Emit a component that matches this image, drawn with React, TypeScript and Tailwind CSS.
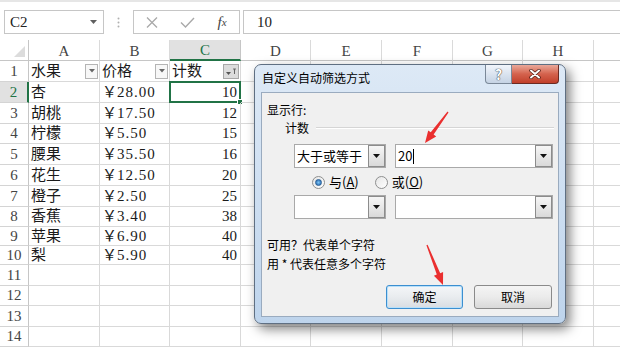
import React from 'react';

const COLS = [
  { key: 'A', cls: 'w-[71px]' },
  { key: 'B', cls: 'w-[70px]' },
  { key: 'C', cls: 'w-[71px]' },
  { key: 'D', cls: 'w-[70px]' },
  { key: 'E', cls: 'w-[71px]' },
  { key: 'F', cls: 'w-[71px]' },
  { key: 'G', cls: 'w-[70px]' },
  { key: 'H', cls: 'w-[71px]' },
  { key: '', cls: 'w-[71px]' },
];

const ROW_H = [
  'h-[21px]', 'h-[21px]', 'h-[21px]', 'h-[20px]', 'h-[21px]', 'h-[21px]', 'h-[21px]',
  'h-[20px]', 'h-[19px]', 'h-[19px]', 'h-[21px]', 'h-[20px]', 'h-[21px]', 'h-[20px]',
];

const DATA: string[][] = [
  ['水果', '价格', '计数'],
  ['杏', '28.00', '10'],
  ['胡桃', '17.50', '12'],
  ['柠檬', '5.50', '15'],
  ['腰果', '35.50', '16'],
  ['花生', '12.50', '20'],
  ['橙子', '2.50', '25'],
  ['香蕉', '3.40', '38'],
  ['苹果', '6.90', '40'],
  ['梨', '5.90', '40'],
];

function FilterBtn({ active }: { active?: boolean }) {
  return (
    <div
      className={
        active
          ? 'ml-auto mr-[1px] w-[16px] h-[15px] border border-[#a8a8a8] bg-[#dcdcdc] flex items-center justify-center'
          : 'ml-auto mr-[1px] w-[13px] h-[15px] border border-[#b4b4b4] bg-[#f7f7f7] flex items-center justify-center'
      }
    >
      {active ? (
        <svg width="12" height="9" viewBox="0 0 12 9">
          <polygon points="1,5 6,5 3.5,8" fill="#555" />
          <polygon points="8,1.5 11,1.5 10,3.5 10,7 9,7 9,3.5" fill="#666" />
        </svg>
      ) : (
        <svg width="6" height="4" viewBox="0 0 6 4">
          <polygon points="0,0 6,0 3,3.5" fill="#666" />
        </svg>
      )}
    </div>
  );
}

function Sheet() {
  return (
    <div className="font-['Liberation_Serif','Noto_Sans_CJK_SC',serif]">
      {/* column headers */}
      <div className="flex h-[21px]">
        <div className="relative w-[29px] shrink-0 border-r border-b border-[#c6c6c6] bg-white">
          <svg className="absolute right-[3px] bottom-[3px]" width="11" height="11" viewBox="0 0 11 11">
            <polygon points="11,0 11,11 0,11" fill="#dcdcdc" />
          </svg>
        </div>
        {COLS.map((c, i) => (
          <div
            key={i}
            className={
              c.key === 'C'
                ? `${c.cls} shrink-0 flex items-center justify-center pt-[2px] text-[15px] bg-[#e1e1e1] border-r border-r-[#c6c6c6] border-b-2 border-b-[#217346] text-[#217346]`
                : `${c.cls} shrink-0 flex items-center justify-center pt-[2px] text-[15px] bg-white border-r border-r-[#dadada] border-b border-b-[#c6c6c6] text-[#444]`
            }
          >
            {c.key}
          </div>
        ))}
      </div>
      {/* rows */}
      {ROW_H.map((h, ri) => {
        const rowNo = ri + 1;
        const row = DATA[ri];
        return (
          <div key={ri} className={`flex ${h}`}>
            <div
              className={
                rowNo === 2
                  ? 'w-[29px] shrink-0 flex items-center justify-center text-[15px] bg-[#e1e1e1] text-[#217346] border-b border-b-[#d4d4d4] border-r-2 border-r-[#217346]'
                  : 'w-[29px] shrink-0 flex items-center justify-center text-[15px] bg-white text-[#444] border-b border-b-[#d4d4d4] border-r border-r-[#c6c6c6]'
              }
            >
              {rowNo}
            </div>
            {COLS.map((c, ci) => {
              let content: React.ReactNode = null;
              if (row && ci < 3) {
                const v = row[ci];
                if (rowNo === 1) {
                  content = (
                    <>
                      <span className="pl-[2px]">{v}</span>
                      <FilterBtn active={ci === 2} />
                    </>
                  );
                } else if (ci === 0) {
                  content = <span className="pl-[2px]">{v}</span>;
                } else if (ci === 1) {
                  content = (
                    <span className="pl-[2px]">
                      ￥<span className="tracking-[1px]">{v}</span>
                    </span>
                  );
                } else {
                  content = <span className="ml-auto pr-[3px]">{v}</span>;
                }
              }
              const selected = rowNo === 2 && ci === 2;
              return (
                <div
                  key={ci}
                  className={`${c.cls} relative shrink-0 flex items-center text-[15px] text-[#1a1a1a] border-r border-b border-[#d9d9d9]`}
                >
                  {content}
                  {selected && (
                    <>
                      <div className="absolute left-[-1px] top-[-1px] right-[-1px] bottom-[-1px] border-2 border-[#217346]" />
                      <div className="absolute right-[-3px] bottom-[-3px] w-[6px] h-[6px] bg-[#217346] border border-white" />
                    </>
                  )}
                </div>
              );
            })}
          </div>
        );
      })}
    </div>
  );
}

function DropBtn() {
  return (
    <div className="w-[17px] h-full border border-[#8c8c8c] bg-linear-to-b from-[#f6f6f6] to-[#d9d9d9] flex items-center justify-center">
      <svg width="7" height="4" viewBox="0 0 7 4">
        <polygon points="0,0 7,0 3.5,4" fill="#111" />
      </svg>
    </div>
  );
}

function Combo({ w, text, caret }: { w: string; text?: string; caret?: boolean }) {
  return (
    <div className={`${w} h-[24px] border border-[#a9a9a9] bg-white flex items-stretch`}>
      <div className="flex-1 flex items-center pl-[2px] text-[13px] leading-[16px] text-black">
        {text}
        {caret && <span className="inline-block w-[1px] h-[15px] bg-black ml-[1px]" />}
      </div>
      <DropBtn />
    </div>
  );
}

function Radio({ checked }: { checked?: boolean }) {
  return (
    <div className="w-[13px] h-[13px] rounded-full border border-[#8e8f8f] bg-linear-to-br from-[#e6e6e6] to-[#ffffff] flex items-center justify-center">
      {checked && (
        <div className="w-[7px] h-[7px] rounded-full bg-radial from-[#7cc4f5] to-[#1c5fa8] border border-[#2a5f95]" />
      )}
    </div>
  );
}

function Dialog() {
  return (
    <div className="absolute left-[254px] top-[64px] w-[312px] h-[260px] rounded-[7px] border border-[#5f6f82] bg-linear-to-b from-[#dde9f6] to-[#bed4ec] shadow-[4px_5px_12px_rgba(0,0,0,0.5)] flex flex-col font-['Noto_Sans_CJK_SC',sans-serif]">
      <div className="h-[27px] flex items-start">
        <div className="flex-1 pl-[7px] pt-[5px] text-[12px] leading-[16px] text-black">自定义自动筛选方式</div>
        <div className="flex mr-[6px]">
          <div className="w-[27px] h-[19px] rounded-bl-[4px] border border-t-0 border-[#7a8898] bg-linear-to-b from-[#f1f5fb] to-[#c5d3e4] flex items-center justify-center">
            <span className="text-[14px] leading-[14px] font-bold text-white [text-shadow:0_0_1px_#333,0_0_1px_#333]">?</span>
          </div>
          <div className="w-[47px] h-[19px] rounded-br-[4px] border border-t-0 border-l-0 border-[#6b2a22] bg-linear-to-b from-[#e9a899] via-[#d4624d] to-[#c13f2a] flex items-center justify-center">
            <svg width="12" height="10" viewBox="0 0 12 10">
              <path d="M2 1.5L10 8.5M10 1.5L2 8.5" stroke="#4a1a14" strokeWidth="3.4" strokeLinecap="round" />
              <path d="M2 1.5L10 8.5M10 1.5L2 8.5" stroke="#ffffff" strokeWidth="2" strokeLinecap="round" />
            </svg>
          </div>
        </div>
      </div>
      <div className="mx-[6px] mb-[6px] flex-1 border border-[#9aabbf] bg-[#f0f0f0] flex flex-col pl-[5px] pt-[9px] text-[12px] leading-[16px] text-black">
        <div>显示行:</div>
        <div className="mt-[2px] flex items-center">
          <span className="ml-[18px]">计数</span>
          <div className="flex-1 ml-[7px] mr-[4px] border-t border-t-[#d5d5d5] border-b border-b-white" />
        </div>
        <div className="mt-[8px] ml-[27px] flex gap-[9px]">
          <Combo w="w-[92px]" text="大于或等于" />
          <Combo w="w-[158px]" text="20" caret />
        </div>
        <div className="mt-[6px] h-[16px] flex items-center">
          <div className="ml-[45px]"><Radio checked /></div>
          <span className="ml-[4px] text-[13px]">与(<span className="underline">A</span>)</span>
          <div className="ml-[16px]"><Radio /></div>
          <span className="ml-[4px] text-[13px]">或(<span className="underline">O</span>)</span>
        </div>
        <div className="mt-[5px] ml-[27px] flex gap-[9px]">
          <Combo w="w-[92px]" />
          <Combo w="w-[158px]" />
        </div>
        <div className="mt-[18px]">可用？代表单个字符</div>
        <div className="mt-[3px]">用 * 代表任意多个字符</div>
        <div className="mt-[13px] ml-[119px] flex gap-[11px]">
          <div className="w-[77px] h-[24px] rounded-[3px] border border-[#3c8fd0] bg-linear-to-b from-[#f4f6f8] via-[#e9ecef] to-[#d8dde2] shadow-[inset_0_0_0_1px_#b8e0fa] flex items-center justify-center">确定</div>
          <div className="w-[78px] h-[24px] rounded-[3px] border border-[#8a8a8a] bg-linear-to-b from-[#f4f4f4] via-[#ebebeb] to-[#d9d9d9] flex items-center justify-center">取消</div>
        </div>
      </div>
    </div>
  );
}

export default function App() {
  return (
    <div className="relative w-[620px] h-[349px] overflow-hidden bg-white">
      <div className="h-[2px] bg-[#e6e6e6]" />
      {/* formula bar */}
      <div className="mt-[8px] flex h-[24px] font-['Liberation_Serif','Noto_Sans_CJK_SC',serif]">
        <div className="ml-[4px] w-[100px] border border-[#c6c6c6] flex items-center pl-[5px] pr-[6px] text-[15px] text-[#222]">
          <span className="flex-1">C2</span>
          <svg width="7" height="4" viewBox="0 0 7 4">
            <polygon points="0,0 7,0 3.5,4" fill="#606060" />
          </svg>
        </div>
        <div className="w-[29px] flex items-center justify-center">
          <svg width="3" height="11" viewBox="0 0 3 11">
            <circle cx="1.5" cy="1.5" r="1" fill="#b0b0b0" />
            <circle cx="1.5" cy="5.5" r="1" fill="#b0b0b0" />
            <circle cx="1.5" cy="9.5" r="1" fill="#b0b0b0" />
          </svg>
        </div>
        <div className="w-[107px] border border-[#c6c6c6] flex items-center">
          <div className="w-[35px] flex justify-center">
            <svg width="12" height="11" viewBox="0 0 12 11">
              <path d="M1 0.5L11 10.5M11 0.5L1 10.5" stroke="#a9a9a9" strokeWidth="1.3" />
            </svg>
          </div>
          <div className="w-[36px] flex justify-center">
            <svg width="15" height="11" viewBox="0 0 15 11">
              <path d="M1 5.5L5.5 10L14 1" stroke="#a9a9a9" strokeWidth="1.4" fill="none" />
            </svg>
          </div>
          <div className="w-[34px] flex justify-center text-[#444] italic text-[15px] leading-[15px]">
            f<span className="text-[11px]">x</span>
          </div>
        </div>
        <div className="ml-[3px] flex-1 border-y border-l border-[#c6c6c6] flex items-center pl-[13px] text-[15px] text-[#222]">10</div>
      </div>
      <div className="mt-[6px]">
        <Sheet />
      </div>
      <Dialog />
      <svg className="absolute left-0 top-0 pointer-events-none" width="620" height="349" viewBox="0 0 620 349">
        <polygon
          points="448.5,112.4 433.65,134.47 436.2,136.4 425,143 428.2,130.4 430.75,132.33 447.5,111.6"
          fill="#ea2f2f"
        />
        <polygon
          points="427.6,244.8 440.2,273.2 443.1,272 443,285 433.9,275.8 436.8,274.6 426.4,245.2"
          fill="#ea2f2f"
        />
      </svg>
    </div>
  );
}
